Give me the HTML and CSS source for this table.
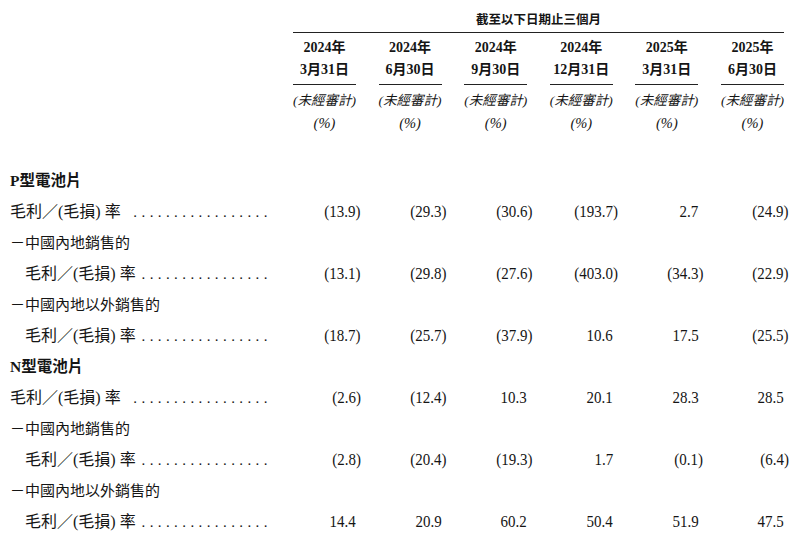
FILE: index.html
```html
<!DOCTYPE html>
<html lang="zh-Hant">
<head>
<meta charset="utf-8">
<link rel="stylesheet" href="styles.css">
</head>
<body>
<div class="page">
  <div class="head">
    <div class="title">截至以下日期止三個月</div>
    <div class="colhead"><div class="yr">2024年</div><div class="dt">3月31日</div><div class="ua">(未經審計)</div><div class="pc">(%)</div></div>
    <div class="colhead"><div class="yr">2024年</div><div class="dt">6月30日</div><div class="ua">(未經審計)</div><div class="pc">(%)</div></div>
    <div class="colhead"><div class="yr">2024年</div><div class="dt">9月30日</div><div class="ua">(未經審計)</div><div class="pc">(%)</div></div>
    <div class="colhead"><div class="yr">2024年</div><div class="dt">12月31日</div><div class="ua">(未經審計)</div><div class="pc">(%)</div></div>
    <div class="colhead"><div class="yr">2025年</div><div class="dt">3月31日</div><div class="ua">(未經審計)</div><div class="pc">(%)</div></div>
    <div class="colhead"><div class="yr">2025年</div><div class="dt">6月30日</div><div class="ua">(未經審計)</div><div class="pc">(%)</div></div>
  </div>

  <div class="table">
    <div class="label heading">P型電池片</div>
    <div class="n"></div><div class="n"></div><div class="n"></div><div class="n"></div><div class="n"></div><div class="n"></div>

    <div class="label lead"><span>毛利／(毛損) 率</span><span class="dots">.................</span></div>
    <div class="n"><span class="v">(13.9<span class="cp">)</span></span></div>
    <div class="n"><span class="v">(29.3<span class="cp">)</span></span></div>
    <div class="n"><span class="v">(30.6<span class="cp">)</span></span></div>
    <div class="n"><span class="v">(193.7<span class="cp">)</span></span></div>
    <div class="n"><span class="v">2.7</span></div>
    <div class="n"><span class="v">(24.9<span class="cp">)</span></span></div>

    <div class="label">－中國內地銷售的</div>
    <div class="n"></div><div class="n"></div><div class="n"></div><div class="n"></div><div class="n"></div><div class="n"></div>

    <div class="label lead sub"><span>毛利／(毛損) 率</span><span class="dots">................</span></div>
    <div class="n"><span class="v">(13.1<span class="cp">)</span></span></div>
    <div class="n"><span class="v">(29.8<span class="cp">)</span></span></div>
    <div class="n"><span class="v">(27.6<span class="cp">)</span></span></div>
    <div class="n"><span class="v">(403.0<span class="cp">)</span></span></div>
    <div class="n"><span class="v">(34.3<span class="cp">)</span></span></div>
    <div class="n"><span class="v">(22.9<span class="cp">)</span></span></div>

    <div class="label">－中國內地以外銷售的</div>
    <div class="n"></div><div class="n"></div><div class="n"></div><div class="n"></div><div class="n"></div><div class="n"></div>

    <div class="label lead sub"><span>毛利／(毛損) 率</span><span class="dots">................</span></div>
    <div class="n"><span class="v">(18.7<span class="cp">)</span></span></div>
    <div class="n"><span class="v">(25.7<span class="cp">)</span></span></div>
    <div class="n"><span class="v">(37.9<span class="cp">)</span></span></div>
    <div class="n"><span class="v">10.6</span></div>
    <div class="n"><span class="v">17.5</span></div>
    <div class="n"><span class="v">(25.5<span class="cp">)</span></span></div>

    <div class="label heading">N型電池片</div>
    <div class="n"></div><div class="n"></div><div class="n"></div><div class="n"></div><div class="n"></div><div class="n"></div>

    <div class="label lead"><span>毛利／(毛損) 率</span><span class="dots">.................</span></div>
    <div class="n"><span class="v">(2.6<span class="cp">)</span></span></div>
    <div class="n"><span class="v">(12.4<span class="cp">)</span></span></div>
    <div class="n"><span class="v">10.3</span></div>
    <div class="n"><span class="v">20.1</span></div>
    <div class="n"><span class="v">28.3</span></div>
    <div class="n"><span class="v">28.5</span></div>

    <div class="label">－中國內地銷售的</div>
    <div class="n"></div><div class="n"></div><div class="n"></div><div class="n"></div><div class="n"></div><div class="n"></div>

    <div class="label lead sub"><span>毛利／(毛損) 率</span><span class="dots">................</span></div>
    <div class="n"><span class="v">(2.8<span class="cp">)</span></span></div>
    <div class="n"><span class="v">(20.4<span class="cp">)</span></span></div>
    <div class="n"><span class="v">(19.3<span class="cp">)</span></span></div>
    <div class="n"><span class="v">1.7</span></div>
    <div class="n"><span class="v">(0.1<span class="cp">)</span></span></div>
    <div class="n"><span class="v">(6.4<span class="cp">)</span></span></div>

    <div class="label">－中國內地以外銷售的</div>
    <div class="n"></div><div class="n"></div><div class="n"></div><div class="n"></div><div class="n"></div><div class="n"></div>

    <div class="label lead sub"><span>毛利／(毛損) 率</span><span class="dots">................</span></div>
    <div class="n"><span class="v">14.4</span></div>
    <div class="n"><span class="v">20.9</span></div>
    <div class="n"><span class="v">60.2</span></div>
    <div class="n"><span class="v">50.4</span></div>
    <div class="n"><span class="v">51.9</span></div>
    <div class="n"><span class="v">47.5</span></div>
  </div>
</div>
</body>
</html>
```

FILE: styles.css
```css
html, body {
  margin: 0;
  padding: 0;
  background: #ffffff;
}

body {
  color: #151515;
  font-family: "Liberation Serif", "Noto Sans CJK TC", serif;
}

.page {
  width: 800px;
  height: 540px;
  padding-left: 10px;
  box-sizing: border-box;
  overflow: hidden;
}

.head {
  display: grid;
  grid-template-columns: 260.4px repeat(6, 85.6px);
}

.title {
  grid-column: 2 / -1;
  margin-left: 22.6px;
  height: 33px;
  box-sizing: border-box;
  padding-top: 12px;
  line-height: 16px;
  font-size: 12.5px;
  font-weight: bold;
  text-align: center;
  border-bottom: 1px solid #222;
}

.colhead {
  margin-left: 22.6px;
  text-align: center;
  padding-top: 4px;
}

.colhead:nth-of-type(2) {
  grid-column: 2;
}

.yr, .dt {
  font-size: 14px;
  font-weight: bold;
  line-height: 22px;
}

.dt {
  padding-bottom: 3px;
  border-bottom: 1px solid #222;
}

.ua {
  margin-top: 5px;
  font-size: 13.5px;
  font-style: italic;
  line-height: 22px;
}

.pc {
  font-size: 14.5px;
  font-style: italic;
  line-height: 23px;
}

.table {
  display: grid;
  grid-template-columns: 260.4px repeat(6, 85.6px);
  grid-auto-rows: 31px;
  align-items: center;
  margin-top: 30px;
}

.label {
  font-size: 15px;
  line-height: 20px;
  white-space: nowrap;
}

.heading {
  font-weight: bold;
  font-size: 15.5px;
}

.lead {
  display: flex;
  justify-content: space-between;
  align-items: baseline;
  font-size: 16px;
}

.sub {
  padding-left: 15px;
}

.dots {
  font-family: "Liberation Serif", serif;
  font-size: 15px;
  letter-spacing: 4.4px;
  margin-right: -1.5px;
}

.n {
  text-align: right;
  font-size: 17px;
  line-height: 20px;
}

.v {
  display: inline-block;
  transform: scaleX(0.88);
  transform-origin: right center;
  white-space: nowrap;
}

.cp {
  margin-right: -5.5px;
}
```
